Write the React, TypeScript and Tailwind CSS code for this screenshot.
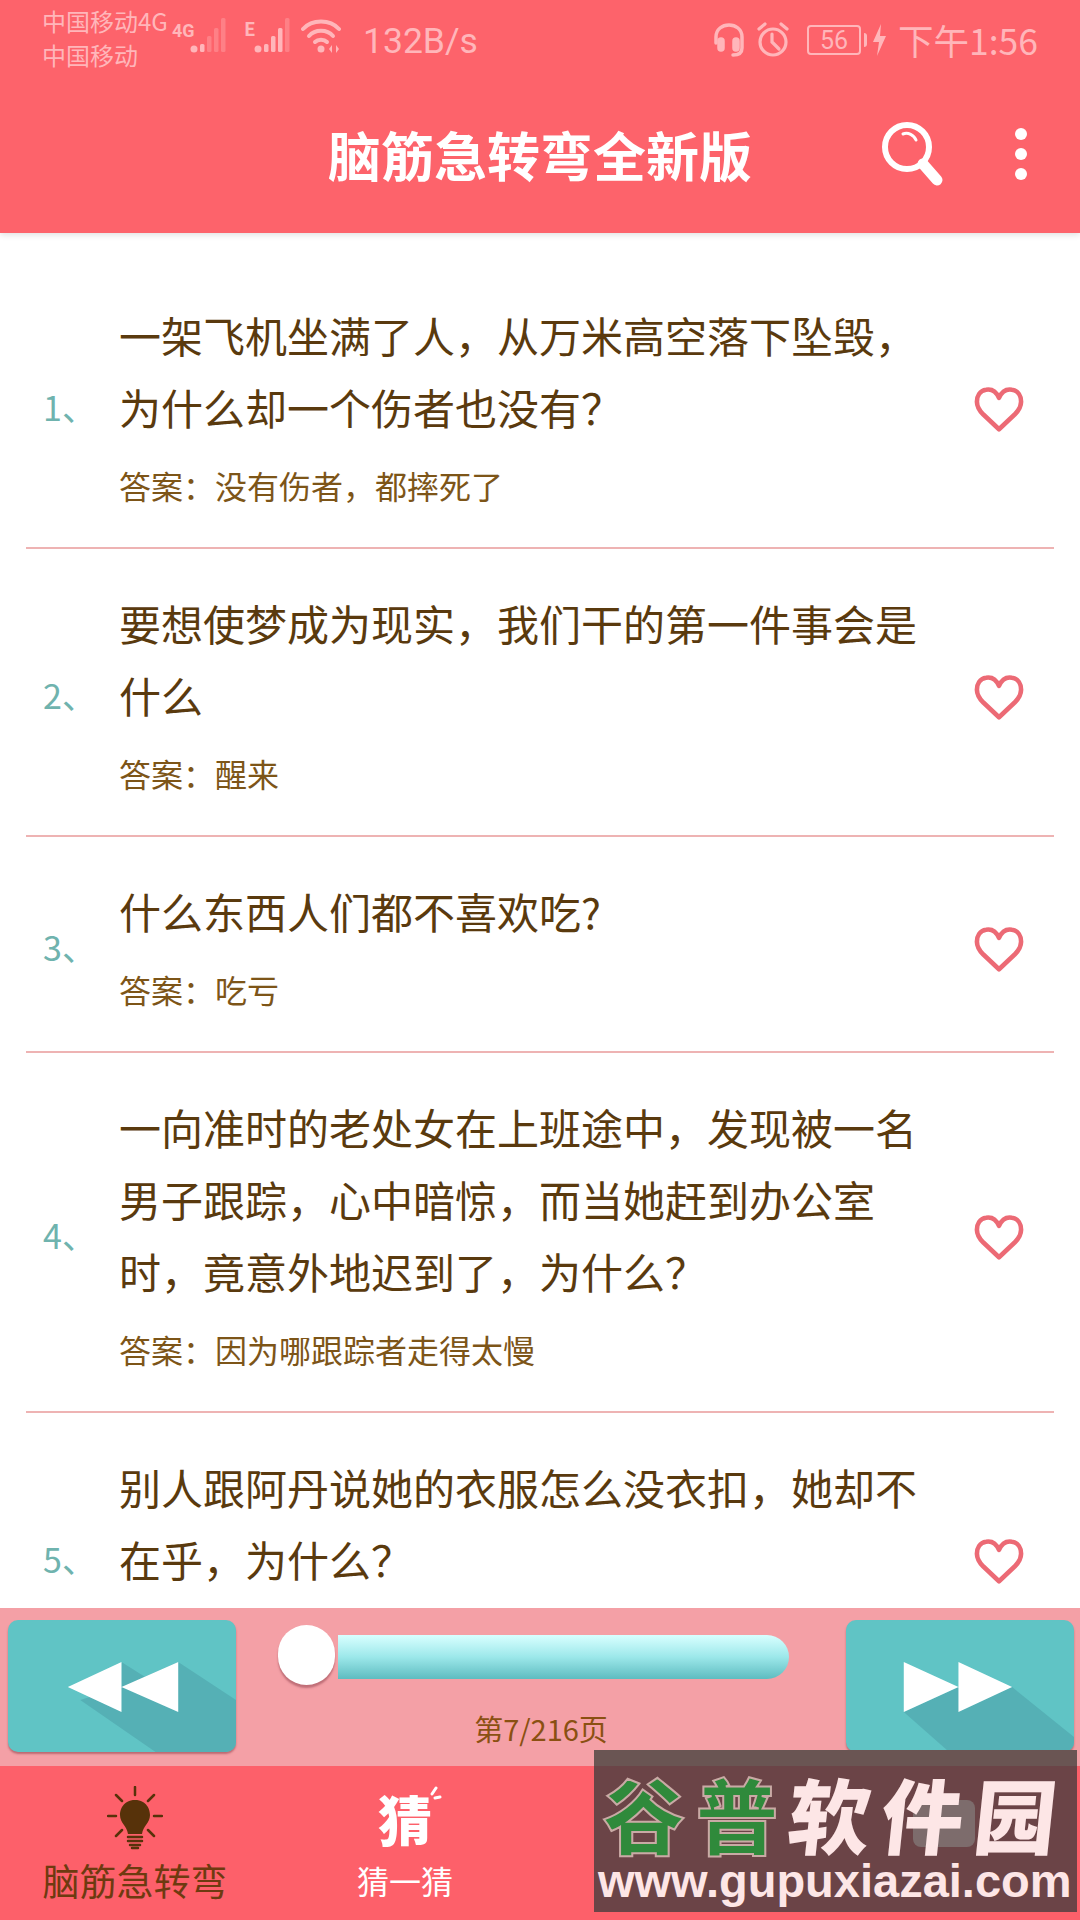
const cjk = "font-['Noto_Sans_CJK_SC','Noto_Sans',sans-serif]";

const rows = [
  { q: '一架飞机坐满了人，从万米高空落下坠毁，为什么却一个伤者也没有？', a: '答案：没有伤者，都摔死了' },
  { q: '要想使梦成为现实，我们干的第一件事会是什么', a: '答案：醒来' },
  { q: '什么东西人们都不喜欢吃?', a: '答案：吃亏' },
  { q: '一向准时的老处女在上班途中，发现被一名男子跟踪，心中暗惊，而当她赶到办公室时，竟意外地迟到了，为什么？', a: '答案：因为哪跟踪者走得太慢' },
  { q: '别人跟阿丹说她的衣服怎么没衣扣，她却不在乎，为什么？', a: '' },
];

function Bars({ lit }: { lit: number }) {
  const hs = [8, 16, 24, 32];
  return (
    <svg width="36" height="36" viewBox="0 0 36 36" fill="#ffb6ba">
      <circle cx="4" cy="31" r="3.5" />
      {hs.map((h, i) => (
        <rect key={i} x={10 + i * 7} y={34 - h - (i === 3 ? 2 : 0)} width="4.5" height={h + (i === 3 ? 2 : 0)} rx="1.5" opacity={i < lit ? 1 : 0.35} />
      ))}
    </svg>
  );
}

function Wifi() {
  return (
    <svg width="40" height="36" viewBox="0 0 40 36" fill="none" stroke="#ffb6ba" strokeWidth="4" strokeLinecap="round">
      <path d="M2 11C11 1 29 1 38 11" />
      <path d="M8 18C14 11 26 11 32 18" />
      <path d="M14 24C17 21 23 21 26 24" />
      <circle cx="20" cy="31" r="3.5" fill="#ffb6ba" stroke="none" />
      <path d="M31 27L28 31L31 35Z M35 27L38 31L35 35Z" fill="#ffb6ba" stroke="none" />
    </svg>
  );
}

function Headset() {
  return (
    <svg width="32" height="36" viewBox="0 0 32 36" fill="none" stroke="#ffb6ba" strokeWidth="3.5" strokeLinecap="round">
      <path d="M3 21V15C3 -1 29 -1 29 15V26C29 31 26 33 20 33" />
      <rect x="6" y="17" width="4" height="11" rx="2" fill="#ffb6ba" />
      <rect x="21" y="17" width="4" height="11" rx="2" fill="#ffb6ba" />
    </svg>
  );
}

function Alarm() {
  return (
    <svg width="34" height="36" viewBox="0 0 34 36" fill="none" stroke="#ffb6ba" strokeWidth="3.2" strokeLinecap="round">
      <circle cx="17" cy="20" r="13" />
      <path d="M16 12V20L23 27" />
      <path d="M3 7L9 2M31 7L25 2" />
    </svg>
  );
}

function Heart() {
  return (
    <svg width="50" height="46" viewBox="0 0 54 50" fill="none" stroke="#ec6a75" strokeWidth="5" strokeLinejoin="round">
      <path d="M27 13C24 6 19 3 13 4C6 5 3 11 3 17C3 23 6 27 10 31L27 47L44 31C48 27 51 23 51 17C51 11 48 5 41 4C35 3 30 6 27 13Z" />
    </svg>
  );
}

function Row({ n, q, a, last }: { n: number; q: string; a: string; last?: boolean }) {
  return (
    <div className={`mx-[26px] flex items-center pt-[38px] pb-[41px] ${last ? '' : 'border-b-2 border-[#eeb3b3]'}`}>
      <div className="mt-[8px] w-[93px] pl-[17px] text-[34px] leading-none text-[#6fb3ae]">{n}、</div>
      <div className="w-[800px]">
        <div className="text-[42px] leading-[72px] text-[#5a3a0e]">{q}</div>
        <div className="mt-[22px] h-[41px] text-[32px] leading-[41px] text-[#7d5518]">{a}</div>
      </div>
      <div className="ml-[55px] mt-[12px]"><Heart /></div>
    </div>
  );
}

function PageButton({ dir }: { dir: 'prev' | 'next' }) {
  return (
    <div className="h-[132px] w-[228px] shrink-0 overflow-hidden rounded-[10px] bg-[#60c4c5] shadow-[0_2px_2px_rgba(150,70,80,0.6)]">
      {dir === 'prev' ? (
        <svg width="228" height="132" viewBox="0 0 221 132" preserveAspectRatio="none">
          <path d="M110 42L133 57L110 67Z M165 42L221 80V132H143L70 80L110 67Z" fill="#55b0b5" />
          <path d="M58 67L110 42V92Z M110 67L165 42V92Z" fill="#fff" />
        </svg>
      ) : (
        <svg width="228" height="132" viewBox="0 0 221 132" preserveAspectRatio="none">
          <path d="M56 92L109 67H161L221 117V132H100Z" fill="#55b0b5" />
          <path d="M56 42L109 67L56 92Z M109 42L161 67L109 92Z" fill="#fff" />
        </svg>
      )}
    </div>
  );
}

function Bulb() {
  return (
    <svg width="56" height="64" viewBox="0 0 56 64" fill="none" stroke="#57320a" strokeWidth="2.5" strokeLinecap="round">
      <path d="M28 1V9M9 9L15 15M47 9L41 15M1 30H9M47 30H55M9 50L15 44M47 50L41 44" />
      <path d="M28 14C16 14 13 24 13 29C13 37 20 40 21 48H35C36 40 43 37 43 29C43 24 40 14 28 14Z" fill="#57320a" stroke="none" />
      <path d="M21 51H35M21 55H35M23 59H33M25 62H31" />
    </svg>
  );
}

export default function App() {
  return (
    <div className={`relative flex h-[1920px] w-[1080px] flex-col overflow-hidden bg-white ${cjk}`}>
      <header className="z-10 h-[233px] shrink-0 bg-[#fd636b] shadow-[0_2px_6px_rgba(0,0,0,0.12)]">
        <div className="flex h-[70px] items-start pl-[42px] pr-[42px] pt-[4px] text-[#ffb6ba]">
          <div className="w-[130px] text-[24px] leading-[34px] whitespace-nowrap">
            <div>中国移动4G</div>
            <div>中国移动</div>
          </div>
          <div className="mt-[14px] flex items-start">
            <span className="w-[18px] pt-[4px] font-['Liberation_Sans_Narrow','Roboto',sans-serif] text-[18px] leading-none font-bold">4G</span>
            <Bars lit={1} />
            <span className="ml-[18px] w-[10px] text-[19px] leading-none font-bold">E</span>
            <Bars lit={3} />
            <span className="ml-[11px]"><Wifi /></span>
            <span className="ml-[22px] pt-[4px] font-['Roboto',sans-serif] text-[35.5px] leading-[38px]">132B/s</span>
          </div>
          <div className="ml-auto mt-[17px] flex items-center">
            <Headset />
            <span className="ml-[11px]"><Alarm /></span>
            <span className="ml-[17px] flex h-[30px] w-[54px] items-center justify-center rounded-[4px] border-2 border-[#ffb6ba] font-['Roboto',sans-serif] text-[25px] leading-none">56</span>
            <span className="ml-[3px] h-[14px] w-[3px] rounded-r bg-[#ffb6ba]" />
            <svg className="ml-[6px]" width="13" height="32" viewBox="0 0 13 32" fill="#ffb6ba"><path d="M8 0L0 18H6L4 32L13 12H7Z" /></svg>
            <span className="ml-[12px] text-[35.5px] leading-[38px] whitespace-nowrap">下午1:56</span>
          </div>
        </div>
        <div className="grid h-[163px] grid-cols-[1fr_auto_1fr] items-center pt-[5px]">
          <div />
          <h1 className="text-[53px] leading-none font-bold text-white">脑筋急转弯全新版</h1>
          <div className="flex items-center justify-end pr-[53px]">
            <svg width="62" height="66" viewBox="0 0 62 66" fill="none" stroke="#fff" strokeLinecap="round">
              <circle cx="26" cy="26" r="22" strokeWidth="6" />
              <path d="M42 43L56 59" strokeWidth="11" />
              <path d="M22 13C27 11 33 14 35 19" strokeWidth="3" />
            </svg>
            <div className="ml-[72px] flex flex-col gap-[8px]">
              <span className="size-[12px] rounded-full bg-white" />
              <span className="size-[12px] rounded-full bg-white" />
              <span className="size-[12px] rounded-full bg-white" />
            </div>
          </div>
        </div>
      </header>

      <main className="min-h-0 flex-1 overflow-hidden pt-[28px]">
        {rows.map((r, i) => (
          <Row key={i} n={i + 1} q={r.q} a={r.a} last={i === 4} />
        ))}
      </main>

      <section className="flex h-[158px] shrink-0 items-start bg-[#f4a0a6] pl-[8px] pt-[12px]">
        <PageButton dir="prev" />
        <div className="flex w-[610px] flex-col items-center">
          <div className="mt-[5px] flex w-full items-center pl-[42px]">
            <div className="h-[60px] w-[57px] shrink-0 rounded-full bg-white shadow-[0_3px_2px_rgba(170,90,100,0.7)]" />
            <div className="ml-[3px] mt-[4px] h-[44px] w-[451px] rounded-r-[22px] bg-gradient-to-b from-[#d8ffff] via-[#9ce8ea] to-[#5dbcc0]" />
          </div>
          <div className="mt-[25px] text-[29px] leading-[36px] text-[#8a5012]">第7/216页</div>
        </div>
        <PageButton dir="next" />
      </section>

      <nav className="flex h-[154px] shrink-0 bg-[#fd606a]">
        <div className="flex w-[270px] flex-col items-center pt-[20px]">
          <Bulb />
          <div className="mt-[6px] text-[37px] leading-[48px] text-[#6e3a10]">脑筋急转弯</div>
        </div>
        <div className="flex w-[270px] flex-col items-center pt-[22px] text-white">
          <div className="relative h-[62px] text-[54px] leading-[62px] font-black">
            猜
            <svg className="absolute top-[-2px] right-[-10px]" width="18" height="18" viewBox="0 0 18 18" stroke="#fff" strokeWidth="3" strokeLinecap="round"><path d="M8 8L12 2M11 12L16 11" /></svg>
          </div>
          <div className="mt-[9px] text-[32px] leading-[42px]">猜一猜</div>
        </div>
      </nav>

      {/* watermark sits over the last tabs */}
      <div className="absolute top-[1750px] left-[594px] h-[162px] w-[483px] overflow-hidden bg-[#6b4447]">
        <div className="h-[16px] bg-[#6a5553]" />
        <div className="absolute top-[50px] left-[319px] h-[47px] w-[62px] rounded-[8px] bg-[#7d6c6c]" />
        <div className="relative mt-[8px] flex h-[78px] items-center pl-[9px] text-[82px] leading-[78px] font-black tracking-[11px] whitespace-nowrap">
          <span className="text-[#2f8a3b] [-webkit-text-stroke:2px_#c9aaa5]">谷普</span>
          <span className="-skew-x-6 text-[#fde6e6]">软件园</span>
        </div>
        <div className="relative mt-[4px] pl-[4px] font-['Liberation_Sans',sans-serif] text-[47px] leading-[50px] font-bold whitespace-nowrap text-[#fde6e6]">www.gupuxiazai.com</div>
      </div>
    </div>
  );
}
